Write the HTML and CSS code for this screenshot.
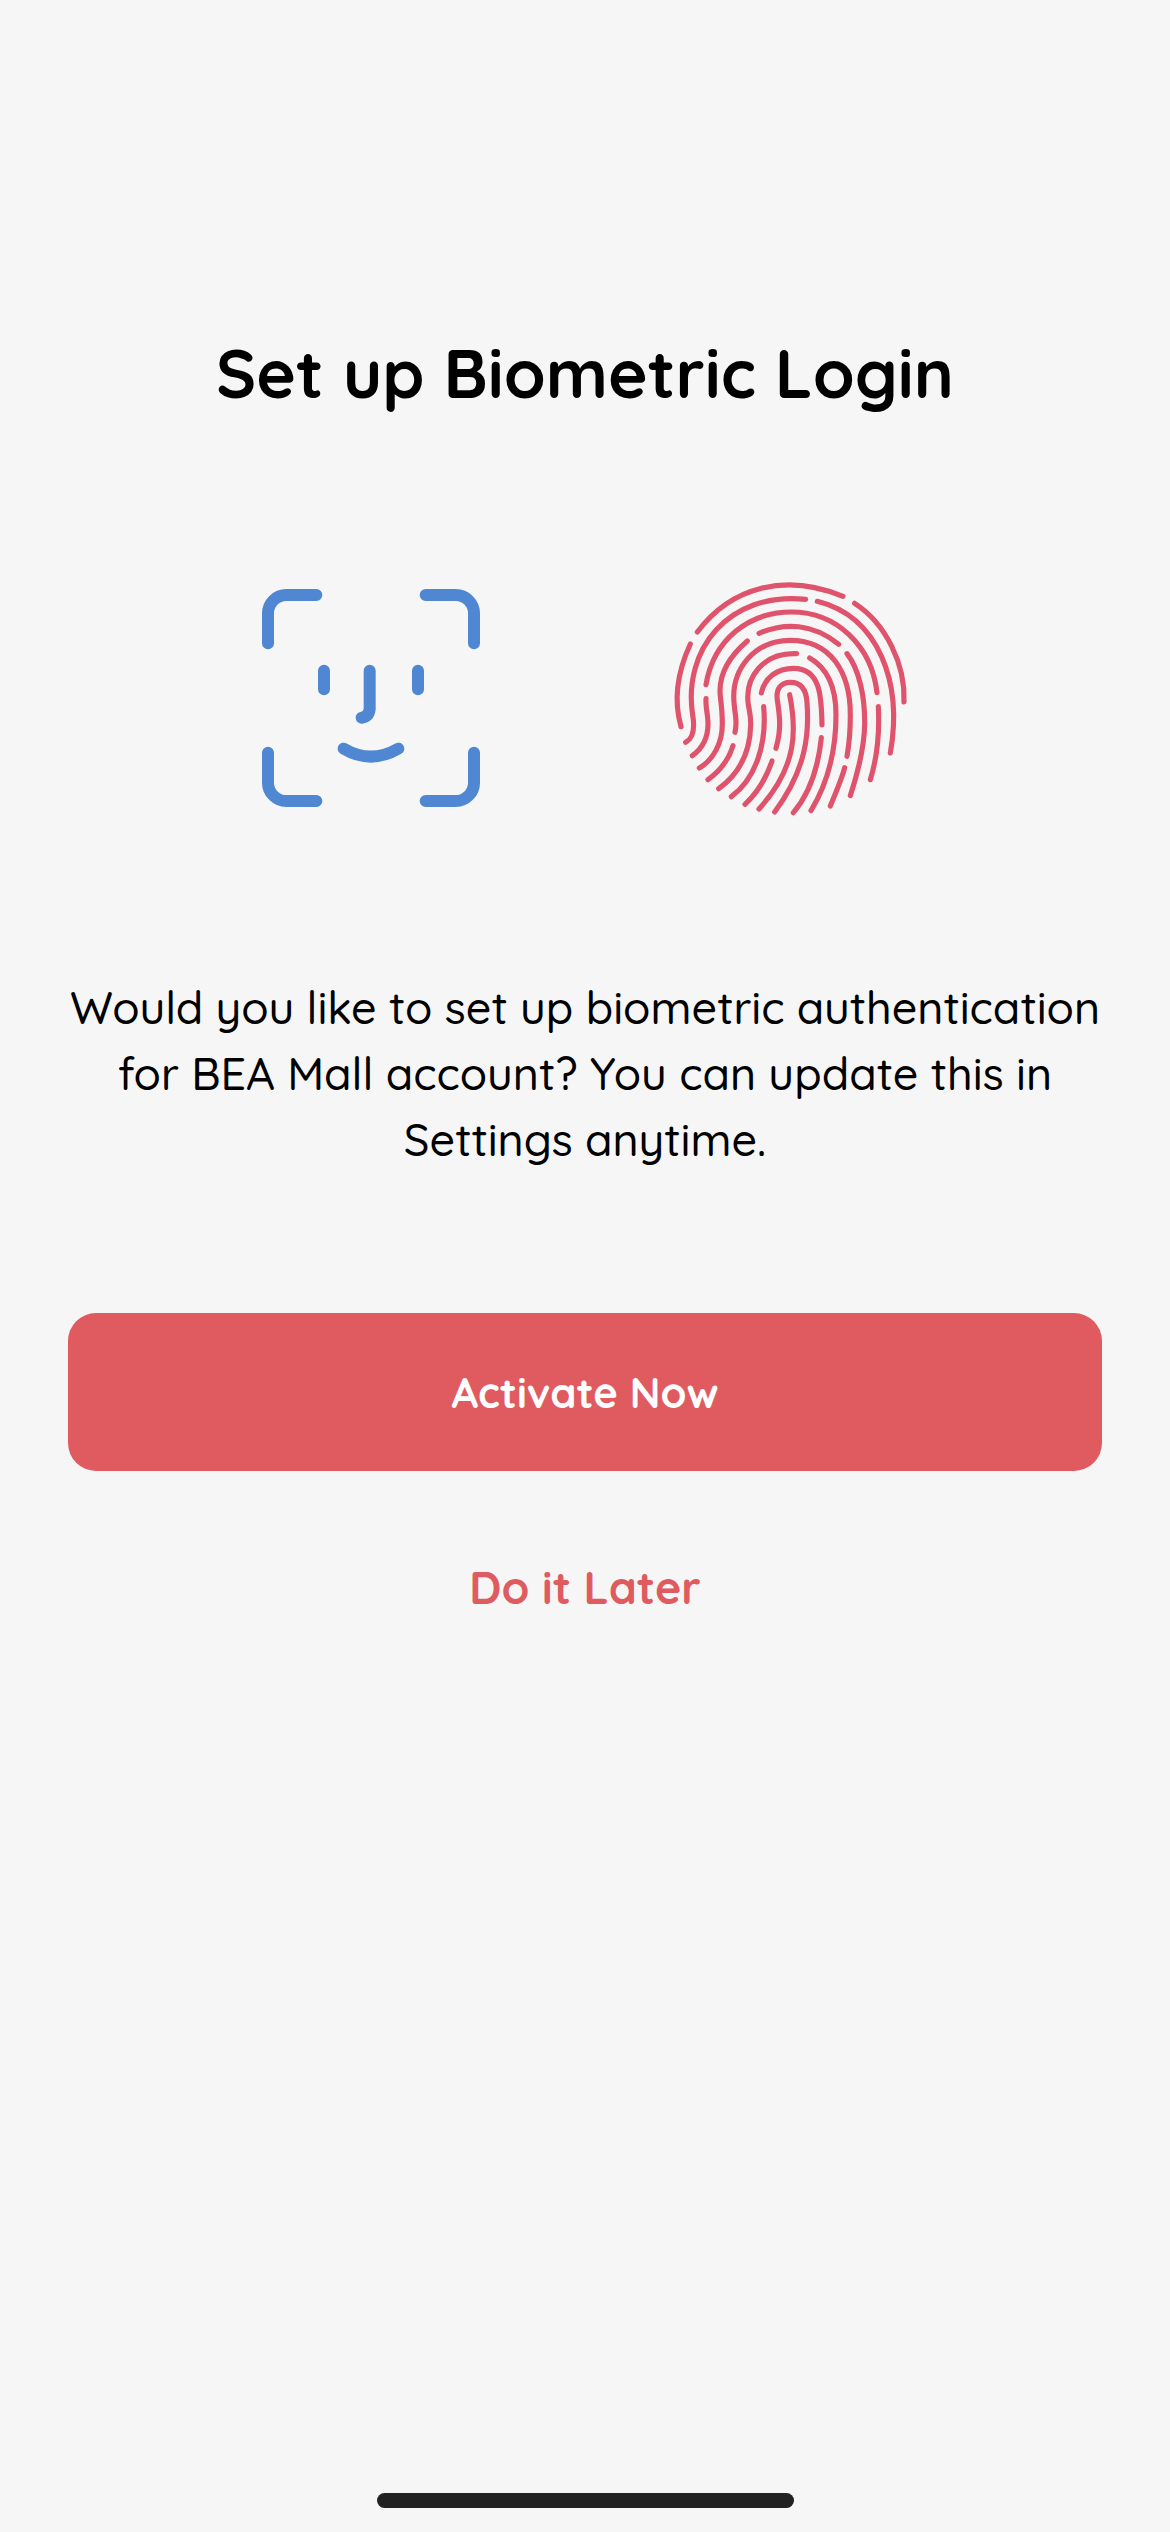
FILE: index.html
```html
<!DOCTYPE html>
<html lang="en">

<head>
    <meta charset="UTF-8">
    <meta name="viewport" content="width=device-width, initial-scale=1.0">
    <title>Set up Biometric Login</title>
    <link rel="stylesheet" href="styles.css">
</head>

<body>
    <main class="screen">
        <h1 class="title">Set up Biometric Login</h1>

        <!-- face id + fingerprint -->
        <div class="icons">
            <svg class="face" viewBox="0 0 720 750">
                <path d="M54 220V130A55 55 0 0 1 109 75H199" />
                <path d="M527 75H617A55 55 0 0 1 672 130V220" />
                <path d="M54 548V638A55 55 0 0 0 109 693H199" />
                <path d="M527 693H617A55 55 0 0 0 672 638V548" />
                <path d="M222 302V358M504 302V358" />
                <path d="M359 302V418Q356 441 335 443" />
                <path d="M281 536Q362 584 445 536" />
            </svg>
            <svg class="finger" viewBox="0 0 780 780">
                <path d="M112 186C214 49 378 8 549 79" />
                <path d="M584 100C677 160 737 283 732 396" />
                <path d="M91 222C48 315 41 393 63 470" />
                <path d="M77 517C98 506 105 476 98 435C68 242 202 64 437 88" />
                <path d="M472 94C658 141 728 340 691 549" />
                <path d="M138 344C161 208 267 126 394 126C529 126 635 226 651 368" />
                <path d="M138 386C136 411 144 434 144 462C144 502 126 536 97 557" />
                <path d="M262 213C201 265 175 323 181 379C187 429 187 427 187 462C187 518 161 569 118 594" />
                <path d="M297 190C373 157 459 159 536 223" />
                <path d="M561 251C598 299 615 380 614 463C613 534 595 603 571 677" />
                <path d="M225 487C233 450 225 438 223 407C209 296 286 211 391 211C512 211 571 306 571 435C571 481 568 519 561 559" />
                <path d="M219 527C207 566 180 603 144 629" />
                <path d="M410 251C311 247 253 321 265 404C268 422 273 437 272 466C270 547 236 613 176 656" />
                <path d="M449 264C502 294 528 354 528 434C528 543 504 638 453 722" />
                <path d="M304 369C314 323 351 295 401 295C486 295 484 391 486 465" />
                <path d="M311 410C321 521 288 625 214 680" />
                <path d="M348 535C364 479 360 443 352 390C347 357 362 337 392 337C425 337 439 361 441 398C448 491 439 598 344 726" />
                <path d="M389 374C409 476 415 587 297 717" />
                <path d="M336 573C320 620 294 667 255 703" />
                <path d="M484 503C475 590 452 667 400 728" />
                <path d="M554 593C547 622 528 667 511 708" />
                <path d="M655 410C659 487 653 557 631 629" />
            </svg>
        </div>

        <p class="desc">Would you like to set up biometric authentication for BEA Mall account? You can update this in Settings anytime.</p>

        <button class="btn_activate">Activate Now</button>
        <a class="btn_later">Do it Later</a>

        <div class="home_bar"></div>
    </main>
</body>

</html>
```

FILE: styles.css
```css
* {
    margin: 0;
    padding: 0;
    box-sizing: border-box;
}

body {
    background: #f6f6f6;
    color: #000;
    font-family: Quicksand, Lato, sans-serif;
}

.screen {
    width: 1170px;
    height: 2532px;
    padding: 323px 56px 24px;
    display: flex;
    flex-direction: column;
    align-items: center;
}

.title {
    height: 100px;
    line-height: 100px;
    font-size: 67.5px;
    font-weight: 700;
    white-space: nowrap;
}

/* icons */
.icons {
    width: 670px;
    margin-top: 147px;
    display: flex;
    justify-content: space-between;
}

.icons svg {
    display: block;
    fill: none;
    stroke-linecap: round;
    stroke-linejoin: round;
}

.face {
    width: 240px;
    height: 250px;
    stroke: #4f87d3;
    stroke-width: 36;
}

.finger {
    width: 260px;
    height: 260px;
    stroke: #df536c;
    stroke-width: 15.5;
}

/* description */
.desc {
    width: 1056px;
    margin-top: 144px;
    font-size: 44.8px;
    font-weight: 500;
    line-height: 66px;
    text-align: center;
}

/* buttons */
.btn_activate {
    width: 1034px;
    height: 158px;
    margin-top: 141px;
    border: none;
    border-radius: 28px;
    background: #e05b60;
    color: #fff;
    font-family: inherit;
    font-size: 41.8px;
    font-weight: 700;
}

.btn_later {
    margin-top: 83px;
    line-height: 66px;
    color: #e05b60;
    font-size: 44.8px;
    font-weight: 700;
}

.home_bar {
    width: 417px;
    height: 15px;
    margin-top: auto;
    border-radius: 8px;
    background: #222;
}
```
